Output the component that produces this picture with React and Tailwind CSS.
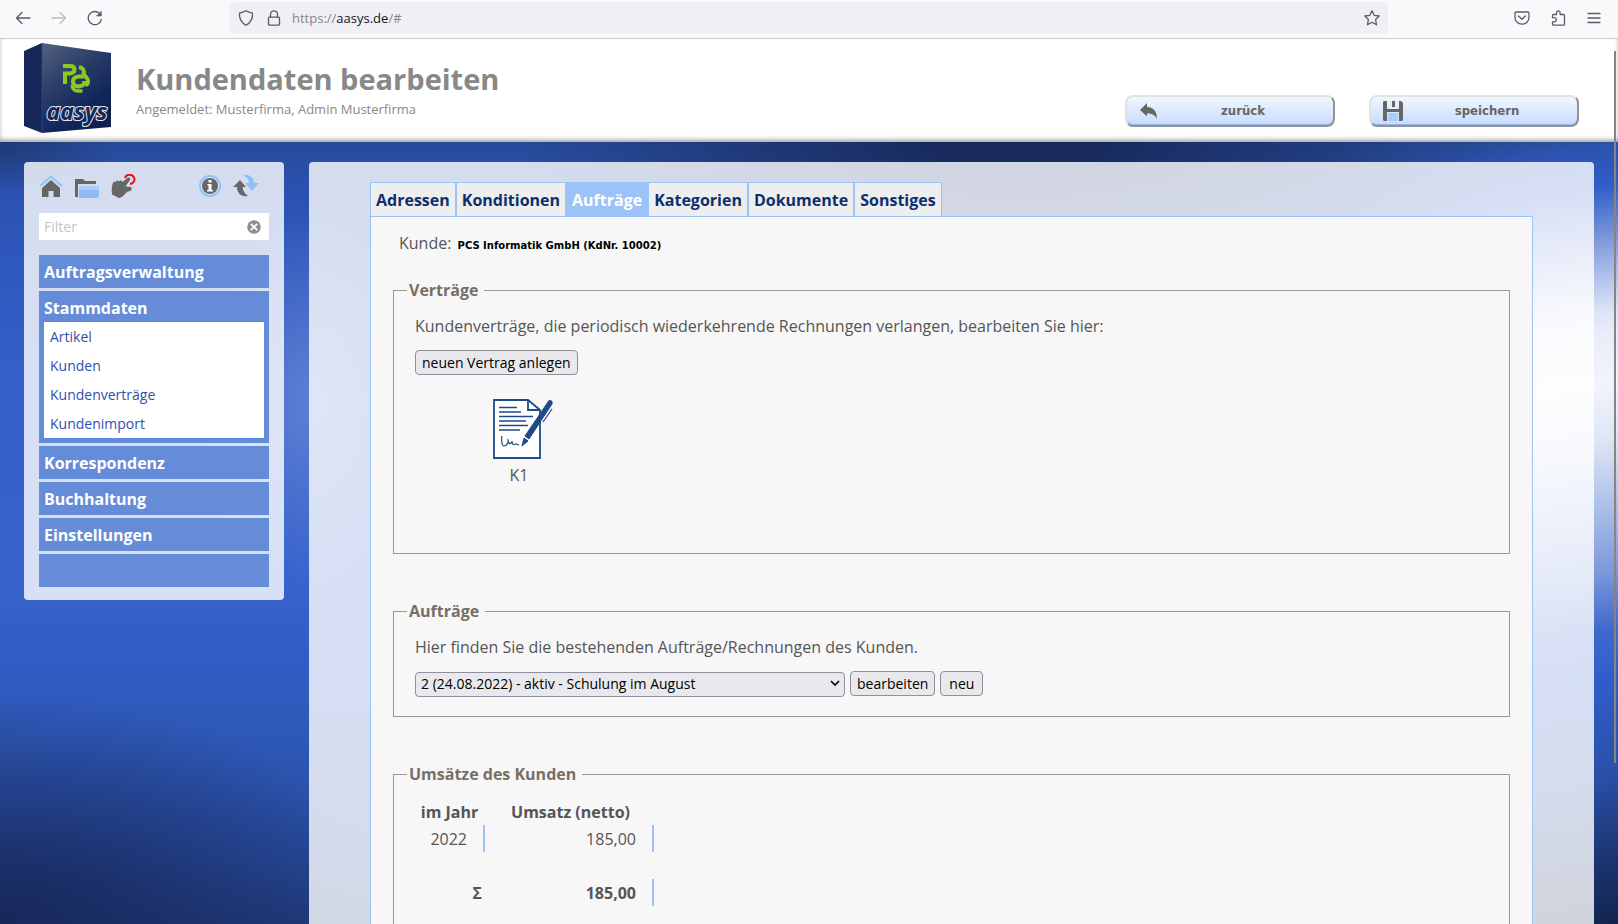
import { useState } from 'react'

const menu = [
  { name: 'Auftragsverwaltung' },
  { name: 'Stammdaten', items: ['Artikel', 'Kunden', 'Kundenverträge', 'Kundenimport'] },
  { name: 'Korrespondenz' },
  { name: 'Buchhaltung' },
  { name: 'Einstellungen' },
  { name: '' },
]

const tabs = ['Adressen', 'Konditionen', 'Aufträge', 'Kategorien', 'Dokumente', 'Sonstiges']

function BrowserBar() {
  const icon = {
    width: 16,
    height: 16,
    viewBox: '0 0 16 16',
    fill: 'none',
    stroke: '#5b5b66',
    strokeWidth: 1.3,
    strokeLinecap: 'round',
    strokeLinejoin: 'round',
  }

  return (
    <div className="flex h-[39px] shrink-0 items-start border-b border-[#ccccce] bg-[#f9f9fb] pt-0.5 pr-4 pl-[15px]">
      <div className="flex h-8 w-[215px] shrink-0 items-center gap-5">
        <button aria-label="Zurück">
          <svg {...icon}><path d="M15 8H1.5M7 2.5L1.5 8L7 13.5" /></svg>
        </button>
        <button aria-label="Vor" disabled>
          <svg {...icon} stroke="#bcbcc2"><path d="M1 8H14.5M9 2.5L14.5 8L9 13.5" /></svg>
        </button>
        <button aria-label="Neu laden">
          <svg {...icon}>
            <path d="M14.3 9.5A6.6 6.6 0 1 1 12.5 3.4" />
            <path d="M14.3 1.5V6H9.8Z" fill="#5b5b66" strokeWidth="0.6" />
          </svg>
        </button>
      </div>

      <div className="flex h-8 flex-1 items-center rounded bg-[#f0f0f4] pr-2 pl-2">
        <svg {...icon}>
          <path d="M8 .8C10 2.3 12.3 2.6 14.3 3C15.3 8 12.5 13 8 15.2C3.5 13 .7 8 1.7 3C3.7 2.6 6 2.3 8 .8Z" />
        </svg>
        <svg {...icon} className="ml-3">
          <rect x="2.5" y="7.2" width="11" height="8" rx="1" />
          <path d="M4.5 7V4.3A3.5 3.5 0 0 1 11.5 4.3V7" />
        </svg>
        <a href="#" className="ml-2.5 flex-1 pt-0.5 text-[13px] text-[#85858c]">
          https://<span className="text-[#15141a]">aasys.de</span>/#
        </a>
        <button aria-label="Lesezeichen">
          <svg {...icon}>
            <path d="M8 .8L10.2 5.3L15.2 6L11.6 9.5L12.5 14.8L8 12.3L3.5 14.8L4.4 9.5L.8 6L5.8 5.3Z" />
          </svg>
        </button>
      </div>

      <div className="flex h-8 w-[214px] shrink-0 items-center justify-end gap-5">
        <button aria-label="Pocket">
          <svg {...icon}>
            <path d="M2.3 2H13.7Q15 2 15 3.3V7.5A7 6.6 0 0 1 1 7.5V3.3Q1 2 2.3 2Z" />
            <path d="M4.5 6L8 9.3L11.5 6" />
          </svg>
        </button>
        <button aria-label="Erweiterungen">
          <svg {...icon}>
            <path d="M2.500 7.500V5.500Q2.500 4.500 3.500 4.500H6.500V2.700A1.800 1.800 0 0 1 10.100 2.700V4.500H13.500Q14.500 4.500 14.500 5.500V14.300Q14.500 15.200 13.500 15.200H3.500Q2.500 15.200 2.500 14.300V11.800H4.200A2 2 0 0 0 4.200 7.700Z" />
          </svg>
        </button>
        <button aria-label="Menü">
          <svg {...icon}><path d="M2 3.5H14M2 8H14M2 12.5H14" /></svg>
        </button>
      </div>
    </div>
  )
}

function Logo() {
  return (
    <svg width="87" height="90" viewBox="0 0 87 90" role="img" aria-label="aasys">
      <defs>
        <linearGradient id="front" x1="0" y1="0" x2="0.6" y2="1">
          <stop offset="0" stopColor="#54617f" />
          <stop offset="0.45" stopColor="#2a3c68" />
          <stop offset="0.8" stopColor="#12265a" />
          <stop offset="1" stopColor="#0f2050" />
        </linearGradient>
      </defs>
      <path d="M0 8L18 0V90L0 83Z" fill="#16285a" />
      <path d="M18 0L87 10V84L18 90Z" fill="url(#front)" />
      <path d="M18 0V90" stroke="#3b4d7c" strokeWidth="0.6" />
      <g fill="none" stroke="#8cc820" strokeWidth="4">
        <path d="M39 23H46Q50.500 23 50.500 26.500Q50.500 30 46 30.500H41V41" />
        <path d="M60 33.500H55Q49 34 49 38.500Q49 43.500 55 43.500L59.500 42" />
        <path d="M55 24C59 25 61 28 59.500 31C62 34 65 36 64 39.500C63 42.500 60 42 60 38" />
        <path d="M48 42Q49 48 54 48H58.500" strokeWidth="3.500" />
      </g>
      <text
        x="53"
        y="77"
        textAnchor="middle"
        fill="#14265a"
        stroke="#e4e7f0"
        strokeWidth="2"
        paintOrder="stroke"
        fontFamily="'Open Sans', sans-serif"
        fontStyle="italic"
        fontWeight="700"
        fontSize="23"
      >
        aasys
      </text>
    </svg>
  )
}

function HeaderButton({ label, children }) {
  return (
    <button className="flex h-8 w-[210px] items-center rounded-lg border-2 border-t-[#e2e2e2] border-r-[#939393] border-b-[#939393] border-l-[#e2e2e2] bg-linear-to-b from-[#f0f8ff] to-[#c8daff] pl-3 font-['DejaVu_Sans_Condensed','DejaVu_Sans',sans-serif] text-[13px] font-bold text-[#666] shadow-[inset_0_-1px_0_#8db8f0]">
      {children}
      <span className="flex-1 pr-1.5 text-center">{label}</span>
    </button>
  )
}

function PageHeader() {
  return (
    <header className="flex h-[103px] shrink-0 items-start bg-white pt-1 pr-[39px] pl-6 shadow-[inset_0_-3px_5px_-1px_#999]">
      <Logo />
      <div className="ml-[25px] flex-1 pt-4">
        <h1 className="text-[29px] leading-10 font-bold text-[#888]">Kundendaten bearbeiten</h1>
        <p className="text-[13px] leading-5 text-[#888]">Angemeldet: Musterfirma, Admin Musterfirma</p>
      </div>
      <div className="flex gap-[34px] pt-[52px]">
        <HeaderButton label="zurück">
          <svg width="20" height="18" viewBox="0 0 20 18">
            <path d="M1 8L8 1V5C14 5 18 9 18 17C16 13 13 11.5 8 11.5V14.5Z" fill="#666" />
          </svg>
        </HeaderButton>
        <HeaderButton label="speichern">
          <svg width="20" height="20" viewBox="0 0 20 20">
            <path d="M1 0H4V8H16V0H18L20 2V19L19 20H16V11H4V20H1L0 19V1Z" fill="#666" />
            <path d="M9 0H12V6H9Z" fill="#666" />
            <path d="M5 12H15V20H5Z" fill="#a9cdf5" />
          </svg>
        </HeaderButton>
      </div>
    </header>
  )
}

function Sidebar() {
  const [filter, setFilter] = useState('')

  return (
    <aside className="w-[260px] shrink-0 rounded bg-white/80 px-[15px] pt-3 pb-[13px]">
      <div className="flex h-6 items-center">
        <button aria-label="Startseite">
          <svg width="24" height="24" viewBox="0 0 24 24">
            <path d="M3 14L12 6L21 14V23H14.5V17H9.5V23H3Z" fill="#666" />
            <path d="M1 12L12 2.5L23 12" fill="none" stroke="#8ec5fa" strokeWidth="2" />
          </svg>
        </button>
        <button aria-label="Ordner" className="ml-3">
          <svg width="24" height="24" viewBox="0 0 24 24">
            <path d="M0 5H8L10 7H21V10H3V23H0Z" fill="#666" />
            <path d="M5 12H24V22Q24 24 22 24H4L4 14Z" fill="#91bcf3" />
            <path d="M5 12H24V16H4Z" fill="#a9cdf8" />
          </svg>
        </button>
        <button aria-label="Hilfe" className="ml-3">
          <svg width="26" height="24" viewBox="0 0 26 24">
            <path d="M2 9Q3 6.500 5 8Q6 5.500 8 7.500Q10 5.500 11.500 8L17 3.500Q20 3 19 6L14.500 12.500L20 13Q21.500 15 20 16.500L16 18L11 23L8 24L1 20.500Q0 13 2 9Z" fill="#666" />
            <path d="M14 4C15 0 21-.5 23 3.500C24.500 7 22 9.500 19 10" fill="none" stroke="#f20d16" strokeWidth="2" />
          </svg>
        </button>
        <button aria-label="Info" className="ml-[62px]">
          <svg width="22" height="22" viewBox="0 0 22 22">
            <circle cx="11" cy="11" r="10" fill="#e2e9f6" stroke="#8ec5fa" strokeWidth="2" />
            <circle cx="11" cy="11" r="8" fill="#666" />
            <path d="M9.5 5H12.5V7.5H9.5ZM8.5 9H12.5V15H14V16.5H8V15H9.5V10.5H8.5Z" fill="#fff" />
          </svg>
        </button>
        <button aria-label="Aktualisieren" className="ml-3">
          <svg width="26" height="24" viewBox="0 0 26 24">
            <path d="M0 13L7 6L13 13H9.5C10 17 12 20 15 22C9 23 4 20 4 13Z" fill="#666" />
            <path d="M11 1C17 0 21 4 21 9H26L19 17L12 9H16C16 6 14 3 11 2Z" fill="#91bffa" />
          </svg>
        </button>
      </div>

      <div className="mt-[15px] flex h-[27px] items-center bg-white pr-2 pl-[5px]">
        <input
          type="text"
          aria-label="Filter"
          placeholder="Filter"
          value={filter}
          onChange={(e) => setFilter(e.target.value)}
          className="min-w-0 flex-1 text-sm text-[#555] outline-none placeholder:text-[#c4c4c4]"
        />
        <button aria-label="Filter löschen" onClick={() => setFilter('')}>
          <svg width="14" height="14" viewBox="0 0 14 14">
            <circle cx="7" cy="7" r="6.8" fill="#8e8e8e" />
            <path d="M3.8 3.8L10.2 10.2M10.2 3.8L3.8 10.2" stroke="#fff" strokeWidth="1.8" />
          </svg>
        </button>
      </div>

      <nav className="mt-[15px] flex flex-col gap-[3px]">
        {menu.map((m, i) => (
          <div key={i} className="bg-[#648cd8] px-[5px] font-bold text-white">
            {m.items ? (
              <div className="pb-[5px]">
                <a href="#" className="block h-[31px] leading-[34px]">{m.name}</a>
                <ul className="bg-white text-sm font-normal text-[#2f4fae]">
                  {m.items.map((item) => (
                    <li key={item}>
                      <a href="#" className="block px-1.5 leading-[29px]">{item}</a>
                    </li>
                  ))}
                </ul>
              </div>
            ) : (
              <a href="#" className="block h-[33px] leading-[34px]">{m.name}</a>
            )}
          </div>
        ))}
      </nav>
    </aside>
  )
}

function Box({ title, className, children }) {
  return (
    <fieldset className={`border border-[#999] px-[21px] ${className}`}>
      <legend className="-ml-2 pr-1.5 pl-0.5 leading-6 font-bold text-[#776f65]">{title}</legend>
      {children}
    </fieldset>
  )
}

function SmallButton({ children }) {
  return (
    <button className="h-[25px] rounded border border-[#8f8f9d] bg-[#e9e9ed] px-1.5 text-sm text-black">
      {children}
    </button>
  )
}

function ContractIcon() {
  return (
    <svg width="60" height="60" viewBox="0 0 60 60" fill="none" stroke="#1f4a86">
      <path d="M1 1H35L47 11V59H1Z" fill="#fff" strokeWidth="1.8" />
      <path d="M35 1V11H47" strokeWidth="1.8" />
      <path d="M6 8.5H24M6 13H28M6 17.5H40M6 22H33M6 26.5H35M6 31H27" strokeWidth="1.4" />
      <path d="M9 37C8 41 9 47 11 47C14 47 16 42 15 41C16 46 17 45 19 43C20 47 21 45 23 45L26 46" strokeWidth="1.2" />
      <path d="M56 1.5Q60 1 59 5L36 40L32 37Z" fill="#1f4a86" strokeWidth="1" />
      <path d="M31 39L35 42L29 47Z" fill="#1f4a86" strokeWidth="1" />
      <path d="M59 10L50 23" strokeWidth="1.2" />
    </svg>
  )
}

function Revenue() {
  return (
    <table className="mt-3 text-[#555]">
      <thead>
        <tr className="h-[27px] text-[#555]">
          <th className="w-[69px] p-0 text-center">im Jahr</th>
          <th className="w-[169px] p-0 pl-1 text-center">Umsatz (netto)</th>
        </tr>
      </thead>
      <tbody>
        <tr className="h-[27px]">
          <td className="border-r-2 border-[#9cc3f8] p-0 pr-4 text-right">2022</td>
          <td className="border-r-2 border-[#9cc3f8] p-0 pr-4 text-right">185,00</td>
        </tr>
        <tr className="h-[27px]">
          <td colSpan={2} />
        </tr>
        <tr className="h-[27px] font-bold">
          <td className="p-0 pr-0.5 text-right">Σ</td>
          <td className="border-r-2 border-[#9cc3f8] p-0 pr-4 text-right">185,00</td>
        </tr>
      </tbody>
    </table>
  )
}

function Backdrop() {
  return (
    <div className="pointer-events-none absolute inset-0 -z-10 bg-[linear-gradient(#274b98_0%,#2b51b0_6%,#2f58bd_15%,#3560cc_32%,#3762cc_58%,#325dc8_64%,#2f5aba_74%,#2b52ab_84%,#27499a_92%,#213c7e_100%)]">
      <div className="absolute inset-0 bg-[radial-gradient(ellipse_110px_190px_at_310px_33%,#7d98d690,#7d98d600)]" />
      <div className="absolute inset-0 bg-[radial-gradient(ellipse_500px_150px_at_63%_0%,#182a5c_15%,#182a5c00)]" />
      <div className="absolute inset-0 bg-[radial-gradient(ellipse_120px_50px_at_0%_0%,#1f3a78,#1f3a7800)]" />
      <div className="absolute inset-0 bg-[radial-gradient(ellipse_400px_230px_at_0%_100%,#17285a,#17285a00)]" />
      <div className="absolute inset-y-0 right-0 w-72 bg-[linear-gradient(172deg,#23417f_0%,#2c52ac_5%,#305dc8_10%,#8fa6e0_18%,#dbe2f5_25%,#e9edf9_28%,#f2f4fc_34%,#dde5f5_41%,#a0b6e6_51%,#7c98dc_57%,#3f69cc_64%,#2f5dca_70%,#2a4fa5_82%,#1c3776_91%,#13244f_100%)] mask-l-from-30%" />
    </div>
  )
}

export default function App() {
  const [active, setActive] = useState('Aufträge')

  return (
    <div className="relative flex h-screen flex-col overflow-hidden font-['Open_Sans','Noto_Sans',sans-serif] text-base text-[#555]">
      <BrowserBar />
      <PageHeader />

      <div className="relative isolate min-h-0 flex-1">
        <Backdrop />
        <div className="flex h-full items-start gap-[25px] overflow-y-auto pt-5 pr-6 pl-6 [scrollbar-width:none]">
          <Sidebar />

          <main className="min-w-0 flex-1 rounded-t bg-white/80 px-[61px] pt-5">
            <div role="tablist" className="flex">
              {tabs.map((t) => (
                <button
                  key={t}
                  role="tab"
                  aria-selected={t === active}
                  onClick={() => setActive(t)}
                  className={
                    'h-[34px] border border-b-0 border-[#9cc3f8] px-[5px] font-bold ' +
                    (t === active ? 'bg-[#9cc3f8] text-white' : 'bg-[#eee] text-[#0c306e]')
                  }
                >
                  {t}
                </button>
              ))}
            </div>

            <div className="border border-[#9cc3f8] bg-[#f7f7f7] px-[22px] pt-3.5 pb-8">
              <p className="ml-1.5 leading-6">
                Kunde:{' '}
                <span className="ml-0.5 font-['DejaVu_Sans',sans-serif] text-[10px] font-bold text-black">
                  PCS Informatik GmbH (KdNr. 10002)
                </span>
              </p>

              <Box title="Verträge" className="mt-5 h-[276px]">
                <p className="mt-3 leading-6">
                  Kundenverträge, die periodisch wiederkehrende Rechnungen verlangen, bearbeiten Sie hier:
                </p>
                <div className="mt-3 flex">
                  <SmallButton>neuen Vertrag anlegen</SmallButton>
                </div>
                <a href="#" className="mt-6 ml-12 flex w-28 flex-col items-center">
                  <span className="pl-2"><ContractIcon /></span>
                  <span className="mt-1 leading-6">K1</span>
                </a>
              </Box>

              <Box title="Aufträge" className="mt-[45px] h-[118px]">
                <p className="mt-3 leading-6">Hier finden Sie die bestehenden Aufträge/Rechnungen des Kunden.</p>
                <div className="mt-3 flex gap-[5px]">
                  <div className="relative w-[430px]">
                    <select
                      aria-label="Auftrag"
                      className="h-[25px] w-full appearance-none rounded border border-[#8f8f9d] bg-[#e9e9ed] px-[5px] text-sm text-black"
                    >
                      <option>2 (24.08.2022) - aktiv - Schulung im August</option>
                    </select>
                    <svg width="10" height="7" viewBox="0 0 10 7" className="pointer-events-none absolute top-[9px] right-[5px]">
                      <path d="M1 1L5 5L9 1" fill="none" stroke="#000" strokeWidth="1.6" />
                    </svg>
                  </div>
                  <SmallButton>bearbeiten</SmallButton>
                  <button className="h-[25px] rounded border border-[#8f8f9d] bg-[#e9e9ed] px-2 text-sm text-black">neu</button>
                </div>
              </Box>

              <Box title="Umsätze des Kunden" className="mt-[45px] h-[240px]">
                <Revenue />
              </Box>
            </div>
          </main>
        </div>
      </div>

      <div className="absolute top-[51px] right-0.5 h-[712px] w-0.5 bg-[#858585]" />
    </div>
  )
}
